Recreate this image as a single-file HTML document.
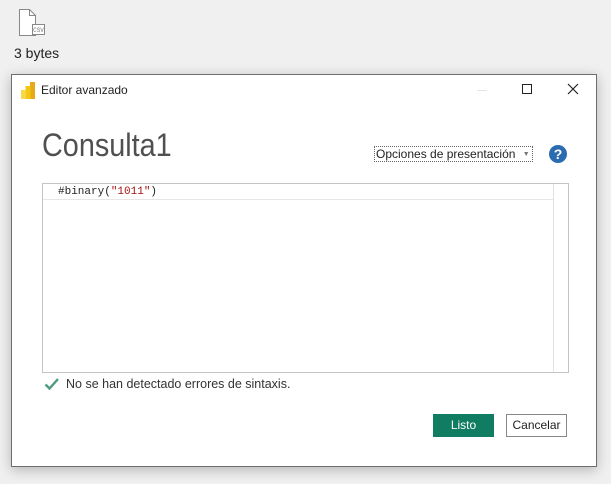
<!DOCTYPE html>
<html><head><meta charset="utf-8"><style>
*{margin:0;padding:0;box-sizing:border-box}
body{width:611px;height:484px;background:#f0f0f0;position:relative;overflow:hidden;font-family:"Liberation Sans",sans-serif}
.abs{position:absolute}
#dlg{left:11px;top:74px;width:586px;height:393px;background:#fff;border:1px solid #6e6e6e;box-shadow:0 3px 12px rgba(0,0,0,.25)}
</style></head><body>
<svg class="abs" style="left:18px;top:8px" width="30" height="34" viewBox="0 0 30 34">
<path d="M1.5 1.5h10l6 6v20h-16z" fill="#fff" stroke="#888"/>
<path d="M11.5 1.5v6h6" fill="none" stroke="#888"/>
<rect x="14.5" y="16.5" width="12" height="10" fill="#fff" stroke="#888"/>
<text x="20.5" y="24" font-size="6" text-anchor="middle" fill="#777" font-family="Liberation Mono">CSV</text>
</svg>
<div class="abs" style="left:14px;top:45px;font-size:14px;color:#222">3 bytes</div>
<div id="dlg" class="abs">
<svg class="abs" style="left:9px;top:7px" width="14" height="17" viewBox="0 0 14 17">
<rect x="9" y="0" width="5" height="17" fill="#e8a817"/>
<rect x="4.5" y="4" width="5" height="13" fill="#f2c811"/>
<rect x="0" y="8" width="5" height="9" fill="#f7d84a"/>
</svg>
<div class="abs" style="left:29px;top:8px;font-size:12px;color:#222">Editor avanzado</div>
<div class="abs" style="left:465px;top:15px;width:10px;height:1px;background:#e4e4e4"></div>
<div class="abs" style="left:510px;top:9px;width:10px;height:10px;border:1px solid #222"></div>
<svg class="abs" style="left:555px;top:8px" width="12" height="12"><path d="M1 1L11 11M11 1L1 11" stroke="#222" stroke-width="1.2"/></svg>
<div class="abs" style="left:30px;top:52px;font-size:32px;color:#505050;transform:scaleX(0.9);transform-origin:0 0">Consulta1</div>
<div class="abs" style="left:362px;top:71px;width:159px;height:16px;border:1px dotted #666;font-size:12px;color:#222;padding-left:1px;line-height:15px">Opciones de presentación <span style="font-size:7px;color:#777;margin-left:4px;vertical-align:2px">▼</span></div>
<div class="abs" style="left:537px;top:70px;width:18px;height:18px;border-radius:50%;background:#2b6cb0;color:#fff;font-weight:bold;font-size:14px;text-align:center;line-height:18px">?</div>
<div class="abs" style="left:30px;top:108px;width:527px;height:190px;border:1px solid #c4c4c4">
<div class="abs" style="left:0;top:0;width:510px;height:16px;border-bottom:1px solid #e6e6e6"></div>
<div class="abs" style="left:510px;top:0;width:1px;height:188px;background:#e2e2e2"></div>
<div class="abs" style="left:15px;top:2px;font-family:'Liberation Mono',monospace;font-size:11px;color:#222">#binary(<span style="color:#a31515">"1011"</span>)</div>
</div>
<svg class="abs" style="left:32px;top:302px" width="16" height="14"><path d="M1.5 7.5L5.5 11.5L14 2" fill="none" stroke="#4e9a82" stroke-width="2.4"/></svg>
<div class="abs" style="left:54px;top:302px;font-size:12.5px;color:#333">No se han detectado errores de sintaxis.</div>
<div class="abs" style="left:421px;top:339px;width:61px;height:23px;background:#107c62;color:#fff;font-size:12px;text-align:center;line-height:23px">Listo</div>
<div class="abs" style="left:494px;top:339px;width:61px;height:23px;border:1px solid #888;color:#222;font-size:12px;text-align:center;line-height:21px">Cancelar</div>
</div>
</body></html>
